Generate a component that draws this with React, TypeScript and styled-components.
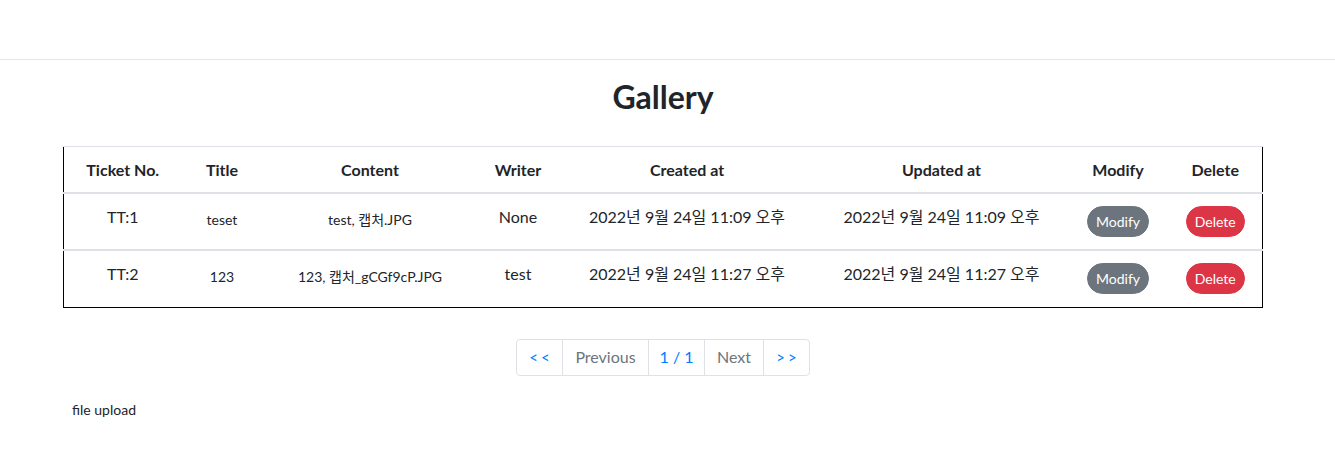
import React from "react";
import styled, { createGlobalStyle } from "styled-components";

const GlobalStyle = createGlobalStyle`
  * { box-sizing: border-box; }
  body {
    margin: 0;
    background: #fff;
    color: #212529;
    font-family: "Lato", "Noto Sans CJK KR", sans-serif;
    font-size: 16px;
    line-height: 1.5;
  }
`;

const NavBar = styled.header`
  height: 60px;
  border-bottom: 1px solid #e5e5e5;
`;

const Main = styled.main`
  width: 1200px;
  margin-left: 63px;
`;

const Heading = styled.h2`
  margin: 18px 0 0;
  height: 68px;
  text-align: center;
  font-size: 32px;
  line-height: 38px;
  font-weight: 700;
  color: #212529;
`;

const Table = styled.table`
  width: 1199px;
  table-layout: fixed;
  border-collapse: collapse;
  border: 1px solid #000;
`;

const HeadCell = styled.th<{ $w: number }>`
  width: ${(p) => p.$w}px;
  height: 46px;
  padding: 12px 0;
  border-top: 1px solid #dee2e6;
  border-bottom: 2px solid #dee2e6;
  font-size: 16px;
  line-height: 21px;
  font-weight: 700;
  text-align: center;
  vertical-align: middle;
`;

const BodyRow = styled.tr`
  & + & td {
    border-top: 2px solid #dee2e6;
  }
`;

const Cell = styled.td<{ $small?: boolean }>`
  height: 57px;
  padding: ${(p) => (p.$small ? "15px 0 0" : "12px 0 0")};
  vertical-align: top;
  text-align: center;
  font-size: ${(p) => (p.$small ? "14px" : "16px")};
  line-height: ${(p) => (p.$small ? "21px" : "22px")};
  white-space: nowrap;
`;

const PillButton = styled.button<{ $tone: "secondary" | "danger" }>`
  display: inline-block;
  height: 31px;
  padding: 4px 8px;
  border: 1px solid ${(p) => (p.$tone === "danger" ? "#dc3545" : "#6c757d")};
  border-radius: 50rem;
  background: ${(p) => (p.$tone === "danger" ? "#dc3545" : "#6c757d")};
  color: #fff;
  font-family: inherit;
  font-size: 14px;
  line-height: 21px;
  cursor: pointer;
`;

const Pager = styled.nav`
  display: flex;
  justify-content: center;
  margin-top: 31px;
`;

const PageList = styled.ul`
  display: flex;
  list-style: none;
  margin: 0;
  padding: 0;
`;

const PageItem = styled.li<{ $muted?: boolean; $w: number }>`
  width: ${(p) => p.$w}px;
  height: 37px;
  display: flex;
  align-items: center;
  justify-content: center;
  border: 1px solid #dee2e6;
  margin-left: -1px;
  color: ${(p) => (p.$muted ? "#6c757d" : "#007bff")};
  font-size: 16px;
  &:first-child {
    margin-left: 0;
    border-radius: 4px 0 0 4px;
  }
  &:last-child {
    border-radius: 0 4px 4px 0;
  }
`;

const Chevrons = styled.span`
  font-size: 15px;
  letter-spacing: 3px;
  margin-right: -3px;
`;

const FootNote = styled.p`
  margin: 23px 0 0 9px;
  font-size: 14px;
  line-height: 21px;
`;

const columns: [string, number][] = [
  ["Ticket No.", 118],
  ["Title", 81],
  ["Content", 215],
  ["Writer", 81],
  ["Created at", 257],
  ["Updated at", 252],
  ["Modify", 101],
  ["Delete", 94],
];

const rows = [
  {
    id: "TT:1",
    title: "teset",
    content: "test, 캡처.JPG",
    writer: "None",
    created: "2022년 9월 24일 11:09 오후",
    updated: "2022년 9월 24일 11:09 오후",
  },
  {
    id: "TT:2",
    title: "123",
    content: "123, 캡처_gCGf9cP.JPG",
    writer: "test",
    created: "2022년 9월 24일 11:27 오후",
    updated: "2022년 9월 24일 11:27 오후",
  },
];

export default function App() {
  return (
    <>
      <GlobalStyle />
      <NavBar />
      <Main>
        <Heading>Gallery</Heading>
        <Table>
          <thead>
            <tr>
              {columns.map(([label, w]) => (
                <HeadCell key={label} $w={w}>
                  {label}
                </HeadCell>
              ))}
            </tr>
          </thead>
          <tbody>
            {rows.map((r) => (
              <BodyRow key={r.id}>
                <Cell>{r.id}</Cell>
                <Cell $small>{r.title}</Cell>
                <Cell $small>{r.content}</Cell>
                <Cell>{r.writer}</Cell>
                <Cell>{r.created}</Cell>
                <Cell>{r.updated}</Cell>
                <Cell>
                  <PillButton $tone="secondary">Modify</PillButton>
                </Cell>
                <Cell>
                  <PillButton $tone="danger">Delete</PillButton>
                </Cell>
              </BodyRow>
            ))}
          </tbody>
        </Table>
        <Pager>
          <PageList>
            <PageItem $w={47}>
              <Chevrons>&lt;&lt;</Chevrons>
            </PageItem>
            <PageItem $w={87} $muted>
              Previous
            </PageItem>
            <PageItem $w={57}>1 / 1</PageItem>
            <PageItem $w={60} $muted>
              Next
            </PageItem>
            <PageItem $w={47}>
              <Chevrons>&gt;&gt;</Chevrons>
            </PageItem>
          </PageList>
        </Pager>
        <FootNote>file upload</FootNote>
      </Main>
    </>
  );
}
